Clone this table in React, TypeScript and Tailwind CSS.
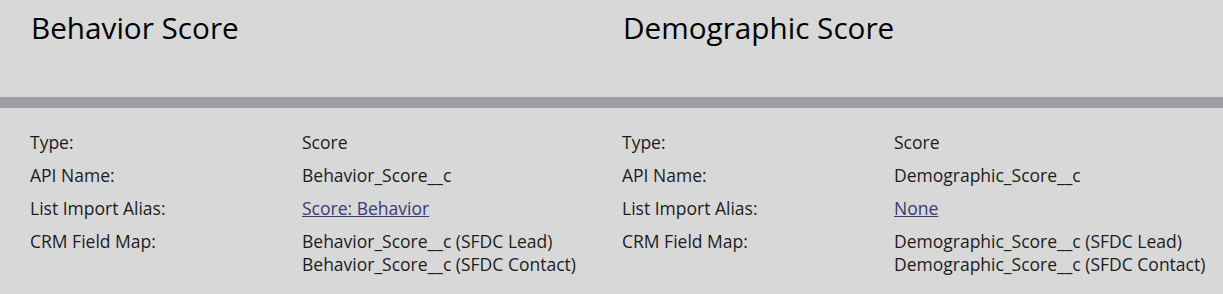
import React from "react";

type Row = { label: string; values: string[]; link?: boolean };

const panels: { title: string; rows: Row[] }[] = [
  {
    title: "Behavior Score",
    rows: [
      { label: "Type:", values: ["Score"] },
      { label: "API Name:", values: ["Behavior_Score__c"] },
      { label: "List Import Alias:", values: ["Score: Behavior"], link: true },
      {
        label: "CRM Field Map:",
        values: ["Behavior_Score__c (SFDC Lead)", "Behavior_Score__c (SFDC Contact)"],
      },
    ],
  },
  {
    title: "Demographic Score",
    rows: [
      { label: "Type:", values: ["Score"] },
      { label: "API Name:", values: ["Demographic_Score__c"] },
      { label: "List Import Alias:", values: ["None"], link: true },
      {
        label: "CRM Field Map:",
        values: ["Demographic_Score__c (SFDC Lead)", "Demographic_Score__c (SFDC Contact)"],
      },
    ],
  },
];

export default function App() {
  return (
    <div
      className="w-[1223px] h-[294px] bg-[#d8d8d8] text-[#1c1c1c] overflow-hidden"
      style={{ fontFamily: '"Open Sans", sans-serif' }}
    >
      <div className="flex h-[97px]">
        {panels.map((p) => (
          <div key={p.title} className="w-[592px] shrink-0 pl-[31px] pt-[7px]">
            <h1 className="text-[29.7px] leading-[42px] text-black">{p.title}</h1>
          </div>
        ))}
      </div>
      <div className="h-[11px] bg-[#9d9ca1]" />
      <div className="flex pt-[23px]">
        {panels.map((p) => (
          <div key={p.title} className="w-[592px] shrink-0 pl-[30px] flex flex-col gap-[10px]">
            {p.rows.map((r) => (
              <div key={r.label} className="flex text-[17.5px] leading-[23px] whitespace-nowrap">
                <div className="w-[272px] shrink-0">{r.label}</div>
                <div className="flex flex-col">
                  {r.values.map((v) =>
                    r.link ? (
                      <a key={v} href="#" className="text-[#3c3a6e] underline">
                        {v}
                      </a>
                    ) : (
                      <span key={v}>{v}</span>
                    )
                  )}
                </div>
              </div>
            ))}
          </div>
        ))}
      </div>
    </div>
  );
}
